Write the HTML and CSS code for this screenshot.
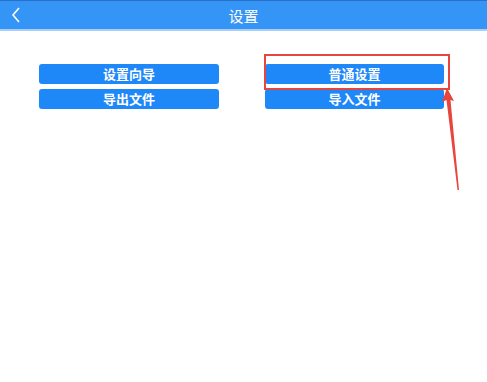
FILE: index.html
```html
<!DOCTYPE html>
<html lang="zh-CN">
<head>
    <meta charset="UTF-8">
    <meta name="viewport" content="width=device-width, initial-scale=1.0">
    <title>设置</title>
    <link rel="stylesheet" href="styles.css">
</head>
<body>
    <div class="header">
        <svg class="back" width="10" height="16" viewBox="0 0 10 16">
            <polyline points="8,1 2,8 8,15" fill="none" stroke="#fff" stroke-width="1.6"/>
        </svg>
        <span class="title">设置</span>
    </div>
    <div class="menu">
        <button class="btn">设置向导</button>
        <button class="btn">普通设置</button>
        <button class="btn">导出文件</button>
        <button class="btn">导入文件</button>
    </div>

    <div class="mark"></div>
    <svg class="arrow" width="40" height="120" viewBox="0 0 40 120">
        <polygon points="9,4 4,18 8.5,16 19.5,106 21,106 12.5,16 16,17" fill="#e8453c"/>
    </svg>
</body>
</html>
```

FILE: styles.css
```css
body {
    font-family: "Noto Sans CJK SC", "Noto Sans", sans-serif;
    margin: 0;
    padding: 0;
    background-color: #ffffff;
    position: relative;
    height: 382px;
}
.header {
    height: 28px;
    background-color: #3595f6;
    border-top: 1px solid #2a6fc6;
    border-bottom: 2px solid #a8cff8;
    display: flex;
    align-items: center;
    justify-content: center;
    position: relative;
}
.back {
    position: absolute;
    left: 11px;
    top: 6px;
}
.title {
    color: #fff;
    font-size: 15px;
}
.menu {
    display: grid;
    grid-template-columns: 180px 179px;
    column-gap: 46px;
    row-gap: 5px;
    padding: 33px 0 0 39px;
}
.btn {
    height: 20px;
    border: none;
    border-radius: 3px;
    background-color: #1f88f8;
    color: #fff;
    font-family: "Noto Sans CJK SC", sans-serif;
    font-size: 13px;
    font-weight: bold;
    padding: 0;
    line-height: 20px;
}
.mark {
    position: absolute;
    left: 264px;
    top: 54px;
    width: 182px;
    height: 32px;
    border: 2px solid #e8453c;
}
.arrow {
    position: absolute;
    left: 438px;
    top: 84px;
}
```
